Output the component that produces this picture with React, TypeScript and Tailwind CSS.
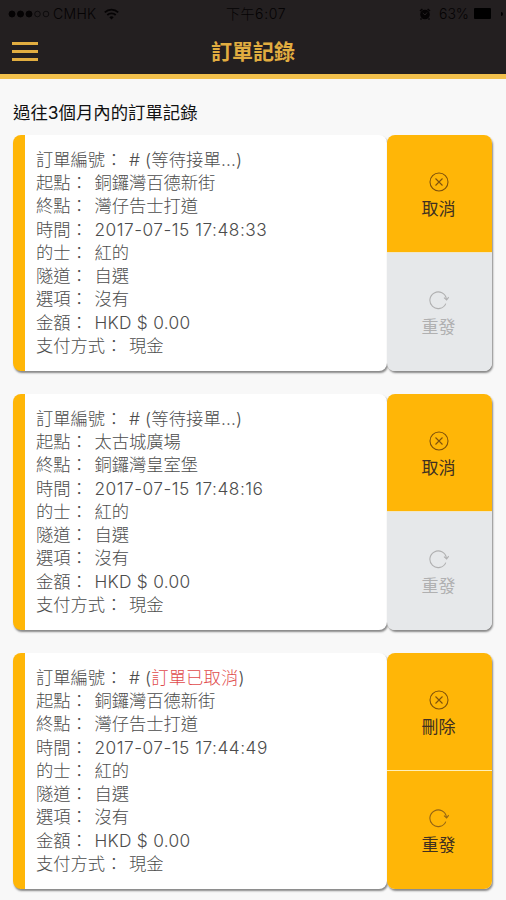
interface Order {
  status: string
  cancelled?: boolean
  from: string
  to: string
  time: string
}

const orders: Order[] = [
  { status: '等待接單...', from: '銅鑼灣百德新街', to: '灣仔告士打道', time: '2017-07-15 17:48:33' },
  { status: '等待接單...', from: '太古城廣場', to: '銅鑼灣皇室堡', time: '2017-07-15 17:48:16' },
  { status: '訂單已取消', cancelled: true, from: '銅鑼灣百德新街', to: '灣仔告士打道', time: '2017-07-15 17:44:49' },
]

function CancelIcon() {
  return (
    <svg className="w-5 h-5" fill="none" stroke="currentColor" strokeWidth={1.1} viewBox="0 0 20 20">
      <circle cx="10" cy="10" r="9" />
      <path d="M6.5 6.5l7 7M13.5 6.5l-7 7" />
    </svg>
  )
}

function ResendIcon() {
  return (
    <svg className="w-5 h-5" fill="none" stroke="currentColor" strokeWidth={1.1} viewBox="0 0 20 20">
      <path d="M16.8 13.6A8.3 8.3 0 1 1 17.4 9" />
      <path d="M15 7.6l2.6 2.4 2.1-2.8" />
    </svg>
  )
}

function StatusBar() {
  return (
    <div className="flex h-[27px] items-center justify-between pl-2 pr-[3px] text-sm text-[#050304]">
      <div className="flex w-[200px] items-center">
        <svg className="w-[44px] h-2" viewBox="0 0 44 8" fill="currentColor" stroke="currentColor">
          <circle cx="4" cy="4" r="3" />
          <circle cx="12.5" cy="4" r="3" />
          <circle cx="21" cy="4" r="3" />
          <circle cx="29.5" cy="4" r="2.8" fill="none" strokeWidth=".7" />
          <circle cx="38" cy="4" r="2.8" fill="none" strokeWidth=".7" />
        </svg>
        <span className="ml-px tracking-[0.3px]">CMHK</span>
        <svg className="ml-2 w-[15px] h-3" viewBox="0 0 15 12" fill="none" stroke="currentColor" strokeWidth={1.8}>
          <path d="M.8 4.3a9.5 9.5 0 0 1 13.4 0M3.3 7a6 6 0 0 1 8.4 0" />
          <path d="M5.3 9.2a3.2 3.2 0 0 1 4.4 0L7.5 11.6z" fill="currentColor" stroke="none" />
        </svg>
      </div>
      <span className="pl-px tracking-[0.6px]">下午6:07</span>
      <div className="flex w-[200px] items-center justify-end">
        <svg className="mr-2 w-3 h-3" viewBox="0 0 12 12">
          <circle cx="6" cy="6.5" r="4.8" fill="currentColor" />
          <path d="M1 3l2.4-2M11 3L8.6 1M2.5 10.5l-1 1M9.5 10.5l1 1" stroke="currentColor" strokeWidth="1.5" />
          <path d="M3.8 5l2.2 2 2-2.5" fill="none" stroke="#231f20" />
        </svg>
        <span>63%</span>
        <span className="ml-[5px] h-[11px] w-[17px] rounded-[1px] bg-black" />
        <span className="ml-[10px] h-[4px] w-[2px] rounded-r bg-black" />
      </div>
    </div>
  )
}

function Row({ label, children }: { label: string; children: React.ReactNode }) {
  return (
    <div className="flex h-[23.3px] items-center whitespace-nowrap">
      <span>{label}：</span>
      <span className="ml-[6.5px]">{children}</span>
    </div>
  )
}

function OrderCard({ order }: { order: Order }) {
  return (
    <div className="flex h-[236px]">
      <div className="flex-1 rounded-lg border-l-[12px] border-[#ffb607] bg-white pl-[11px] pt-[13px] text-[17.3px] text-[#4c4c4c] shadow-[1px_2px_2px_#888]">
        <Row label="訂單編號">
          <span className="tracking-[0.15px]">
            # ({order.cancelled ? <span className="text-[#df4b4b]">{order.status}</span> : order.status})
          </span>
        </Row>
        <Row label="起點">{order.from}</Row>
        <Row label="終點">{order.to}</Row>
        <Row label="時間">
          <span className="tracking-[0.5px]">{order.time}</span>
        </Row>
        <Row label="的士">紅的</Row>
        <Row label="隧道">自選</Row>
        <Row label="選項">沒有</Row>
        <Row label="金額">
          <span className="tracking-[0.3px]">HKD $ 0.00</span>
        </Row>
        <Row label="支付方式">現金</Row>
      </div>
      <div className="flex w-[105px] flex-col overflow-hidden rounded-lg text-[17px] font-normal text-[#403020] shadow-[1px_2px_2px_#888]">
        <button className="flex h-[117px] flex-col items-center bg-[#ffb607] pr-[2px] pt-[37px]">
          <span className="text-[#80530b]"><CancelIcon /></span>
          <span className="mt-[5px] leading-6">{order.cancelled ? '刪除' : '取消'}</span>
        </button>
        {order.cancelled ? (
          <button className="flex flex-1 flex-col items-center border-t border-[#fff0b8] bg-[#ffb607] pr-[2px] pt-[37px]">
            <span className="text-[#946514]"><ResendIcon /></span>
            <span className="mt-[5px] leading-6">重發</span>
          </button>
        ) : (
          <button className="flex flex-1 flex-col items-center border-t border-[#f1e6c7] bg-[#e6e8ea] pr-[2px] pt-[37px] text-[#b0b0b1]" disabled>
            <ResendIcon />
            <span className="mt-[5px] leading-6">重發</span>
          </button>
        )}
      </div>
    </div>
  )
}

export default function App() {
  return (
    <div className="h-[900px] overflow-hidden bg-[#f8f8f8] font-['Inter','Noto_Sans_CJK_TC',sans-serif] font-light">
      <header className="h-[79px] border-b-[5px] border-[#f1c04c] bg-[#231f20]">
        <StatusBar />
        <div className="flex h-[49px] items-center px-3">
          <button className="flex w-[26px] flex-col gap-[5px]">
            <span className="h-[3px] bg-[#e1ad40]" />
            <span className="h-[3px] bg-[#e1ad40]" />
            <span className="h-[3px] bg-[#e1ad40]" />
          </button>
          <h1 className="flex-1 pr-[26px] text-center text-[21px] font-bold text-[#e1ad40]">訂單記錄</h1>
        </div>
      </header>
      <main className="pl-[13px] pr-[14px]">
        <h2 className="flex h-14 items-center pt-[13px] text-[17.4px] font-normal text-[#111]">過往3個月內的訂單記錄</h2>
        <div className="flex flex-col gap-[23px]">
          {orders.map((order) => (
            <OrderCard key={order.time} order={order} />
          ))}
        </div>
      </main>
    </div>
  )
}
